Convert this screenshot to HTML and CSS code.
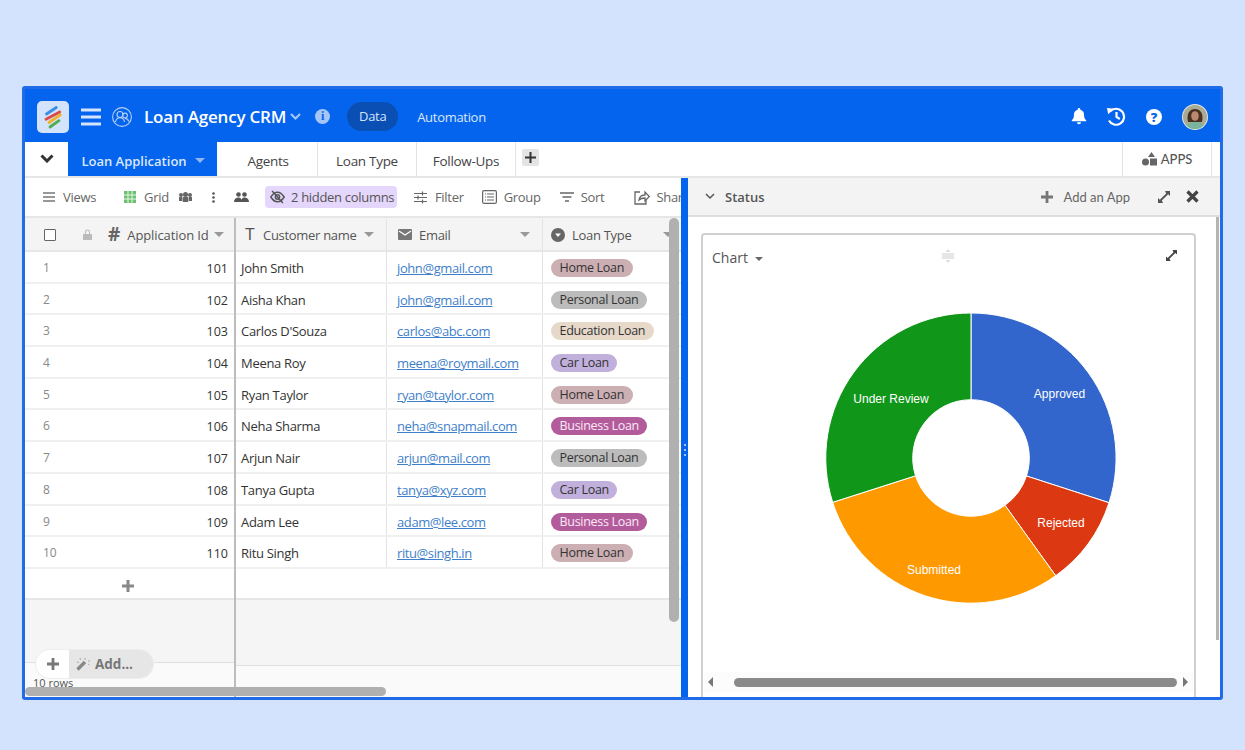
FILE: index.html
```html
<!DOCTYPE html>
<html lang="en">
<head>
<meta charset="utf-8">
<title>Loan Agency CRM</title>
<link rel="stylesheet" href="styles.css">
</head>
<body>
<div class="frame">
  <header class="topbar">
    <div class="logo">
      <svg width="32" height="32" viewBox="0 0 32 32"><g stroke-width="2.800" stroke-linecap="round"><path d="M9.500 13 19.300 6.500" stroke="#3a8ee6"/><path d="M9 18.300 22.700 11" stroke="#dd4a48"/><path d="M12 21.500 23.300 13.800" stroke="#eeb32e"/><path d="M13 26 22 19.700" stroke="#4cae4f"/></g></svg>
    </div>
    <svg class="burger" width="20" height="18" viewBox="0 0 20 18"><path d="M0 2h20M0 9h20M0 16h20" stroke="#d5e4fb" stroke-width="3"/></svg>
    <svg class="people" width="20" height="20" viewBox="0 0 20 20" fill="none" stroke="#b5d0f8" stroke-width="1.100"><circle cx="10" cy="10" r="9.400"/><circle cx="8" cy="7.500" r="3"/><path d="M3.500 15c.5-3 2-4.300 4.500-4.300s4 1.300 4.500 4.300"/><circle cx="13" cy="8.500" r="2.400"/><path d="M13 11.500c2 0 3.300 1 3.800 3"/></svg>
    <span class="title">Loan Agency CRM</span>
    <svg class="title-chev" width="11" height="7" viewBox="0 0 11 7" fill="none"><path d="M1 1l4.500 4.500L10 1" stroke="#a9c8f7" stroke-width="2"/></svg>
    <span class="info">i</span>
    <span class="pill-data">Data</span>
    <span class="auto">Automation</span>
    <div class="top-right">
      <svg width="16" height="17" viewBox="0 0 16 17"><path fill="#fff" d="M8 0a1.300 1.300 0 0 1 1.300 1.300v.4A5 5 0 0 1 13 6.500c0 4 1.500 5 2.200 5.800v1H.8v-1C1.500 11.500 3 10.500 3 6.500a5 5 0 0 1 3.700-4.800v-.4A1.300 1.300 0 0 1 8 0zM6 14.300h4a2 2 0 0 1-4 0z"/></svg>
      <svg class="history" width="20" height="19" viewBox="0 0 20 19" fill="none"><path d="M4.200 4.300A8 8 0 1 1 3 13.500" stroke="#fff" stroke-width="2.200"/><path d="M1 1l7 .8-5.800 5.500z" fill="#fff"/><path d="M10.500 5v5l3.300 2" stroke="#fff" stroke-width="2.200"/></svg>
      <span class="help">?</span>
      <svg class="avatar" width="26" height="26" viewBox="0 0 26 26"><defs><clipPath id="av"><circle cx="13" cy="13" r="12"/></clipPath></defs><circle cx="13" cy="13" r="13" fill="#e2e6dc"/><g clip-path="url(#av)"><rect width="26" height="26" fill="#a9ab94"/><path d="M6 18C4 9 8 5 13 5s9 4 7 13z" fill="#4a3022"/><ellipse cx="13" cy="12" rx="3.800" ry="4.800" fill="#b98a6e"/><path d="M2 27c1-7 6-9 11-9s10 2 11 9z" fill="#79b59c"/></g></svg>
    </div>
  </header>

  <nav class="tabs">
    <span class="tab-toggle"><svg width="14" height="9" viewBox="0 0 14 9" fill="none"><path d="M1.500 1.500 7 7l5.500-5.500" stroke="#333" stroke-width="3"/></svg></span>
    <span class="tab tab-active">Loan Application <i class="caret caret-light"></i></span>
    <span class="tab tab-plain">Agents</span>
    <span class="tab tab-plain">Loan Type</span>
    <span class="tab tab-plain">Follow-Ups</span>
    <span class="tab-add"><svg width="11" height="11" viewBox="0 0 11 11"><path d="M5.500 0v11M0 5.500h11" stroke="#333" stroke-width="2"/></svg></span>
    <span class="apps">
      <svg width="15" height="14" viewBox="0 0 15 14" fill="#666"><path d="M9.500 0l3.500 5H6z"/><circle cx="3.500" cy="10" r="3.500"/><rect x="8" y="6.500" width="7" height="7"/></svg>
      APPS
    </span>
  </nav>

  <main class="workspace">
    <section class="left">
      <div class="toolbar">
        <span class="tool t-views"><svg width="12" height="10" viewBox="0 0 12 10"><path d="M0 1h12M0 5h12M0 9h12" stroke="#777" stroke-width="1.300"/></svg>Views</span>
        <span class="tool t-grid"><svg width="12" height="12" viewBox="0 0 12 12"><rect width="12" height="12" fill="#6cc070"/><path d="M0 4h12M0 8h12M4 0v12M8 0v12" stroke="#e8f6e8" stroke-width="1"/></svg>Grid</span>
        <svg class="t-group" width="13" height="10" viewBox="0 0 13 10" fill="#666"><circle cx="6.500" cy="2.500" r="2.500"/><circle cx="2" cy="3" r="2"/><circle cx="11" cy="3" r="2"/><rect x="3.500" y="5" width="6" height="5" rx="1"/><rect x="0" y="5" width="3" height="4"/><rect x="10" y="5" width="3" height="4"/></svg>
        <svg class="t-dots" width="3" height="11" viewBox="0 0 3 11" fill="#555"><circle cx="1.500" cy="1.500" r="1.300"/><circle cx="1.500" cy="5.500" r="1.300"/><circle cx="1.500" cy="9.500" r="1.300"/></svg>
        <svg class="t-people" width="15" height="10" viewBox="0 0 15 10" fill="#555"><circle cx="4.500" cy="2.500" r="2.300"/><circle cx="10.500" cy="2.500" r="2.300"/><path d="M0 10c0-3 2-4.500 4.500-4.500S7.300 7 7.500 8c.2-1 .5-2.500 3-2.500S15 7 15 10z"/></svg>
        <span class="tool t-hidden"><svg width="15" height="14" viewBox="0 0 14 13" fill="none" stroke="#555" stroke-width="1.400"><path d="M.8 6.500C3 3 5 2 7 2s4 1 6.200 4.500C11 10 9 11 7 11S3 10 .8 6.500z"/><circle cx="7" cy="6.500" r="2"/><path d="M2 1l10 11"/></svg>2 hidden columns</span>
        <span class="tool t-filter"><svg width="13" height="13" viewBox="0 0 13 13" stroke="#666" stroke-width="1.200" fill="none"><path d="M0 2.500h13M0 6.500h13M0 10.500h13M8.500 .5v4M4 4.500v4M8.500 8.500v4"/></svg>Filter</span>
        <span class="tool t-grp"><svg width="15" height="14" viewBox="0 0 15 14" fill="none" stroke="#666" stroke-width="1.200"><rect x=".6" y=".6" width="13.800" height="12.800" rx="1.500"/><path d="M5 4h7M5 7h7M5 10h7M3 4h1M3 7h1M3 10h1"/></svg>Group</span>
        <span class="tool t-sort"><svg width="14" height="10" viewBox="0 0 14 10" stroke="#666" stroke-width="1.400"><path d="M0 1h14M2.500 5h9M5 9h4"/></svg>Sort</span>
        <span class="tool t-share"><svg width="16" height="15" viewBox="0 0 16 15" fill="none" stroke="#666" stroke-width="1.300"><path d="M6 2H1v12h11V10"/><path d="M5 10c.5-3.500 3-5 6-5V2l4.300 4.500L11 11V8c-2.500 0-4.500.5-6 2z"/></svg>Share</span>
      </div>

      <div class="grid">
        <div class="pane pane-frozen">
          <div class="head head-frozen">
            <span class="checkbox"></span>
            <svg class="lock" width="9" height="11" viewBox="0 0 9 11" fill="#bbb"><path d="M2 5V3a2.500 2.500 0 0 1 5 0v2h2v6H0V5zm1 0h3V3a1.500 1.500 0 0 0-3 0z"/></svg>
            <span class="hash">#</span>
            <span class="head-label head-app">Application Id</span>
            <i class="caret"></i>
          </div>
          <div class="row frow"><span class="idx">1</span><span class="num">101</span></div>
          <div class="row frow"><span class="idx">2</span><span class="num">102</span></div>
          <div class="row frow"><span class="idx">3</span><span class="num">103</span></div>
          <div class="row frow"><span class="idx">4</span><span class="num">104</span></div>
          <div class="row frow"><span class="idx">5</span><span class="num">105</span></div>
          <div class="row frow"><span class="idx">6</span><span class="num">106</span></div>
          <div class="row frow"><span class="idx">7</span><span class="num">107</span></div>
          <div class="row frow"><span class="idx">8</span><span class="num">108</span></div>
          <div class="row frow"><span class="idx">9</span><span class="num">109</span></div>
          <div class="row frow"><span class="idx">10</span><span class="num">110</span></div>
          <div class="add-row"><svg width="12" height="12" viewBox="0 0 12 12"><path d="M6 0v12M0 6h12" stroke="#888" stroke-width="3"/></svg></div>
          <div class="spacer"></div>
          <div class="foot foot-frozen"><span class="row-count">10 rows</span></div>
        </div>
        <div class="pane pane-rest">
          <div class="head head-rest">
            <div class="hc c-name"><span class="ty-t">T</span><span class="head-label">Customer name</span><i class="caret"></i></div>
            <div class="hc c-mail"><svg width="14" height="11" viewBox="0 0 14 11"><rect width="14" height="11" rx="1" fill="#777"/><path d="M1 2l6 4 6-4" stroke="#fff" fill="none" stroke-width="1.200"/></svg><span class="head-label">Email</span><i class="caret"></i></div>
            <div class="hc c-type"><svg width="14" height="14" viewBox="0 0 14 14"><circle cx="7" cy="7" r="7" fill="#666"/><path d="M4 5.500h6L7 9z" fill="#fff"/></svg><span class="head-label">Loan Type</span><i class="caret"></i></div>
          </div>
          <div class="row"><div class="c-name">John Smith</div><div class="c-mail"><a>john@gmail.com</a></div><div class="c-type"><span class="chip home">Home Loan</span></div></div>
          <div class="row"><div class="c-name">Aisha Khan</div><div class="c-mail"><a>john@gmail.com</a></div><div class="c-type"><span class="chip personal">Personal Loan</span></div></div>
          <div class="row"><div class="c-name">Carlos D'Souza</div><div class="c-mail"><a>carlos@abc.com</a></div><div class="c-type"><span class="chip edu">Education Loan</span></div></div>
          <div class="row"><div class="c-name">Meena Roy</div><div class="c-mail"><a>meena@roymail.com</a></div><div class="c-type"><span class="chip car">Car Loan</span></div></div>
          <div class="row"><div class="c-name">Ryan Taylor</div><div class="c-mail"><a>ryan@taylor.com</a></div><div class="c-type"><span class="chip home">Home Loan</span></div></div>
          <div class="row"><div class="c-name">Neha Sharma</div><div class="c-mail"><a>neha@snapmail.com</a></div><div class="c-type"><span class="chip biz">Business Loan</span></div></div>
          <div class="row"><div class="c-name">Arjun Nair</div><div class="c-mail"><a>arjun@mail.com</a></div><div class="c-type"><span class="chip personal">Personal Loan</span></div></div>
          <div class="row"><div class="c-name">Tanya Gupta</div><div class="c-mail"><a>tanya@xyz.com</a></div><div class="c-type"><span class="chip car">Car Loan</span></div></div>
          <div class="row"><div class="c-name">Adam Lee</div><div class="c-mail"><a>adam@lee.com</a></div><div class="c-type"><span class="chip biz">Business Loan</span></div></div>
          <div class="row"><div class="c-name">Ritu Singh</div><div class="c-mail"><a>ritu@singh.in</a></div><div class="c-type"><span class="chip home">Home Loan</span></div></div>
          <div class="add-row"></div>
          <div class="spacer"></div>
          <div class="foot"></div>
        </div>
      </div>

      <div class="add-pill">
        <span class="add-plus"><svg width="12" height="12" viewBox="0 0 12 12"><path d="M6 0v12M0 6h12" stroke="#777" stroke-width="2.800"/></svg></span>
        <span class="add-more"><svg width="14" height="14" viewBox="0 0 14 14"><path d="M1.500 12.500 9 5" stroke="#888" stroke-width="3.400"/><path d="M4 1l.5 2M9 1v2M1 5l2 .5M12 4h2M12 7l1.500 1" stroke="#aaa" stroke-width="1"/></svg>Add...</span>
      </div>
      <div class="vscroll"></div>
      <div class="hscroll"></div>
    </section>

    <div class="divider"><span class="grip"></span><span class="grip"></span><span class="grip"></span></div>

    <section class="right">
      <div class="status">
        <svg width="10" height="7" viewBox="0 0 10 7" fill="none"><path d="M1 1l4 4 4-4" stroke="#555" stroke-width="1.500"/></svg>
        <span class="status-title">Status</span>
        <span class="add-app"><svg width="12" height="12" viewBox="0 0 12 12"><path d="M6 0v12M0 6h12" stroke="#777" stroke-width="2.800"/></svg>Add an App</span>
        <svg class="st-expand" width="12" height="12" viewBox="0 0 12 12"><path d="M7 0h5v5l-1.800-1.800-6.400 6.400L5 12H0V7l1.800 1.800 6.400-6.400z" fill="#555"/></svg>
        <svg class="st-close" width="13" height="13" viewBox="0 0 13 13"><path d="M1.500 1.500l10 10M11.500 1.500l-10 10" stroke="#444" stroke-width="3.200"/></svg>
      </div>
      <div class="panel">
        <div class="card">
          <div class="card-head">
            <span class="chart-menu">Chart <i class="caret caret-small"></i></span>
            <svg class="drag" width="12" height="14" viewBox="0 0 12 14"><path d="M0 5h12M0 7h12M0 9h12" stroke="#ccc" stroke-width="1"/><path d="M6 0l2.500 3h-5zM6 14l2.500-3h-5z" fill="#ddd"/></svg>
            <svg class="card-expand" width="11" height="11" viewBox="0 0 12 12"><path d="M7 0h5v5l-1.800-1.800-6.400 6.400L5 12H0V7l1.800 1.800 6.400-6.400z" fill="#444"/></svg>
          </div>
          <svg class="donut" width="300" height="300" viewBox="0 0 300 300">
            <g stroke="#fff" stroke-width="1">
              <path fill="#3366cc" d="M150 5A145 145 0 0 1 288 194.700L205.500 168A58.300 58.300 0 0 0 150 91.700Z"/>
              <path fill="#dc3912" d="M288 194.700A145 145 0 0 1 234.700 267.700L184 197.300A58.300 58.300 0 0 0 205.500 168Z"/>
              <path fill="#ff9900" d="M234.700 267.700A145 145 0 0 1 11.700 194.300L94.500 167.800A58.300 58.300 0 0 0 184 197.300Z"/>
              <path fill="#109618" d="M11.700 194.300A145 145 0 0 1 150 5L150 91.700A58.300 58.300 0 0 0 94.500 167.800Z"/>
            </g>
            <g class="donut-labels">
              <text x="238.500" y="89.500">Approved</text>
              <text x="240" y="219">Rejected</text>
              <text x="113" y="266">Submitted</text>
              <text x="70" y="95">Under Review</text>
            </g>
          </svg>
          <div class="card-scroll">
            <i class="arrow-l"></i>
            <span class="card-thumb"></span>
            <i class="arrow-r"></i>
          </div>
        </div>
        <div class="panel-scroll"></div>
      </div>
    </section>
  </main>
</div>
</body>
</html>
```
FILE: styles.css
```css
* { box-sizing: border-box; }
html, body { margin: 0; height: 100%; }
body {
  background: #d3e3fd;
  padding: 86px 0 0 22px;
  font-family: "Open Sans", "Noto Sans", sans-serif;
  font-size: 13px;
  letter-spacing: -.3px;
  color: #333;
  overflow: hidden;
}
.frame {
  width: 1201px;
  height: 614px;
  border: 3px solid #1f6be8;
  border-radius: 3px;
  background: #fff;
  display: flex;
  flex-direction: column;
  overflow: hidden;
}

/* top bar */
.topbar {
  height: 53px;
  flex: none;
  background: #0564ee;
  display: flex;
  align-items: center;
  color: #fff;
  margin: 0 -3px;
  padding-left: 15px;
  padding-top: 2px;
}
.logo {
  width: 32px; height: 32px;
  background: #d3e3fb;
  border-radius: 5px;
  display: flex;
}
.burger { margin-left: 12px; }
.people { margin-left: 11px; }
.title { margin-left: 12px; font-size: 17px; font-weight: 600; letter-spacing: -.2px; }
.title-chev { margin-left: 4px; }
.info {
  margin-left: 14px;
  width: 15px; height: 15px;
  border-radius: 50%;
  background: #a5c5f7;
  color: #0564ee;
  font: bold 12px/15px "Liberation Serif", serif;
  letter-spacing: 0;
  text-align: center;
}
.pill-data {
  margin-left: 17px;
  width: 51px; height: 29px;
  border-radius: 15px;
  background: #0a4fb4;
  color: #d5e4fb;
  line-height: 29px;
  text-align: center;
}
.auto { margin-left: 19px; color: #dbe8fc; }
.top-right {
  margin-left: auto;
  margin-right: 15px;
  display: flex;
  align-items: center;
}
.history { margin-left: 19px; }
.help {
  margin-left: 20px;
  width: 16px; height: 16px;
  border-radius: 50%;
  background: #fff;
  color: #0564ee;
  font-size: 13px;
  font-weight: 800;
  line-height: 16px;
  letter-spacing: 0;
  text-align: center;
}
.avatar { margin-left: 20px; }

/* tabs */
.tabs {
  height: 36px;
  flex: none;
  display: flex;
  align-items: stretch;
  border-bottom: 2px solid #e6e6e6;
}
.tab-toggle { width: 43px; display: flex; justify-content: center; padding-top: 12px; }
.tab {
  display: flex; align-items: center; justify-content: center;
  font-size: 13.500px;
  padding-top: 3px;
}
.tab-active {
  width: 149px;
  background: #0564ee;
  color: #dbe8fc;
  font-weight: 600;
  font-size: 13px;
  letter-spacing: 0;
  gap: 8px;
  padding-left: 1px;
  margin-right: 2px;
}
.tab-plain { width: 99px; border-right: 1px solid #e3e3e3; color: #444; }
.tab-add {
  width: 17px; height: 17px;
  background: #e4e4e4;
  border-radius: 2px;
  margin: 7px 0 0 6px;
  display: flex; align-items: center; justify-content: center;
}
.apps {
  margin-left: auto;
  margin-right: 8px;
  width: 90px;
  border-left: 1px solid #e3e3e3;
  border-right: 1px solid #e3e3e3;
  display: flex; align-items: center; justify-content: center;
  gap: 4px;
  font-family: Lato, sans-serif;
  font-size: 13px;
  font-weight: 500;
  letter-spacing: 0;
  color: #555;
}
.caret {
  display: inline-block;
  width: 0; height: 0;
  border-left: 5px solid transparent;
  border-right: 5px solid transparent;
  border-top: 5.500px solid #999;
}
.caret-light { border-top-color: #8fb6f3; }
.caret-small { border-left-width: 4px; border-right-width: 4px; border-top: 4.500px solid #666; vertical-align: 2px; margin-left: 3px; }

/* workspace */
.workspace { flex: 1; min-height: 0; display: flex; }
.left {
  width: 656px;
  flex: none;
  position: relative;
  overflow: hidden;
  display: flex;
  flex-direction: column;
}
.toolbar {
  height: 40px;
  flex: none;
  display: flex;
  align-items: center;
  border-bottom: 2px solid #e6e6e6;
  color: #666;
  white-space: nowrap;
  padding-left: 18px;
}
.tool { display: inline-flex; align-items: center; gap: 8px; }
.t-grid { margin-left: 28px; }
.t-group { margin-left: 10px; flex: none; }
.t-dots { margin-left: 20px; flex: none; }
.t-people { margin-left: 19px; flex: none; }
.t-hidden {
  margin-left: 16px;
  width: 132px; height: 22px;
  background: #e5d6fc;
  border-radius: 4px;
  padding-left: 5px;
  gap: 6px;
  color: #555;
  flex: none;
}
.t-filter { margin-left: 17px; }
.t-grp { margin-left: 18px; gap: 7px; }
.t-sort { margin-left: 19px; gap: 7px; }
.t-share { margin-left: 30px; gap: 6px; }

.grid { flex: 1; min-height: 0; display: flex; background: #f5f5f5; }
.pane { display: flex; flex-direction: column; }
.pane-frozen { width: 211px; flex: none; border-right: 2px solid #bdbdbd; }
.pane-rest { flex: 1; min-width: 0; }
.head {
  height: 34px;
  flex: none;
  background: #f4f4f4;
  border-bottom: 2px solid #e6e6e6;
  display: flex;
  align-items: center;
  color: #555;
  padding-top: 1px;
}
.head-frozen { padding-left: 19px; }
.checkbox { width: 12px; height: 12px; border: 1.500px solid #666; background: #fff; flex: none; border-radius: 1px; }
.lock { margin-left: 27px; flex: none; }
.hash { margin-left: 16px; font-size: 19px; font-weight: 700; color: #666; line-height: 1; letter-spacing: 0; }
.head-label { margin-left: 7px; white-space: nowrap; }
.head-app { letter-spacing: -.1px; }
.head .caret { margin-left: auto; flex: none; }
.head-frozen .caret { margin-right: 10px; }
.hc { display: flex; align-items: center; height: 100%; }
.hc.c-name { padding-left: 8px; padding-right: 12px; }
.hc.c-mail { padding-left: 11px; padding-right: 12px; }
.hc.c-type { padding-left: 8px; padding-right: 0; }
.hc.c-type .caret { margin-left: 32px; }
.ty-t { font: 400 16px "Liberation Sans", sans-serif; color: #555; width: 12px; text-align: center; letter-spacing: 0; }
.c-name { width: 151px; flex: none; border-right: 1px solid #e3e3e3; }
.c-mail { width: 156px; flex: none; border-right: 1px solid #e3e3e3; }
.c-type { flex: 1; min-width: 0; white-space: nowrap; }
.row {
  height: 31.700px;
  flex: none;
  background: #fff;
  border-bottom: 2px solid #f0f0f0;
  display: flex;
  align-items: stretch;
  color: #333;
  line-height: 33px;
}
.row .c-name { padding-left: 5px; }
.row .c-mail { padding-left: 10px; }
.row .c-type { padding-left: 8px; }
.row a { color: #3f7fca; text-decoration: underline; letter-spacing: -.4px; }
.frow { justify-content: space-between; padding: 0 6px 0 18px; }
.idx { color: #888; font-size: 12px; line-height: 31px; letter-spacing: 0; }
.num { font-size: 12.500px; letter-spacing: 0; }
.chip {
  display: inline-block;
  height: 18px;
  line-height: 18px;
  border-radius: 9px;
  padding: 0 8.500px;
  font-size: 12.500px;
  vertical-align: 1px;
  color: #333;
}
.home { background: #ccafb3; }
.personal { background: #bcbcbc; }
.edu { background: #e6d9ca; }
.car { background: #c2b0dc; }
.biz { background: #b25c9c; color: #fbe9f6; }
.add-row {
  height: 31px;
  flex: none;
  background: #fff;
  border-bottom: 2px solid #e6e6e6;
  display: flex;
  align-items: center;
  justify-content: center;
  padding: 6px 4px 0 0;
}
.spacer { flex: 1; }
.foot { height: 32px; flex: none; background: #fafafa; border-top: 1px solid #e0e0e0; }
.foot-frozen { height: 35px; position: relative; }
.row-count { position: absolute; left: 8px; top: 12px; font-size: 11px; letter-spacing: 0; color: #555; }
.add-pill {
  position: absolute;
  left: 11px;
  top: 472px;
  width: 117px; height: 28px;
  border-radius: 14px;
  background: #e6e6e6;
  display: flex;
  overflow: hidden;
  box-shadow: 0 0 0 1px #eee;
}
.add-plus { width: 33px; background: #fff; display: flex; align-items: center; justify-content: center; }
.add-more { display: flex; align-items: center; gap: 5px; padding-left: 7px; font-size: 13.500px; font-weight: 700; letter-spacing: 0; color: #777; }
.vscroll {
  position: absolute;
  right: 2px; top: 40px;
  width: 10px; height: 404px;
  background: #b0b0b0;
  border-radius: 5px;
}
.hscroll {
  position: absolute;
  left: 0; bottom: 1px;
  width: 361px; height: 9px;
  background: #b0b0b0;
  border-radius: 5px;
}

/* divider */
.divider {
  width: 7px;
  flex: none;
  background: #0564ee;
  display: flex;
  flex-direction: column;
  align-items: center;
  justify-content: center;
  gap: 3px;
  padding-top: 25px;
}
.grip { width: 2px; height: 2px; background: #d6e5fc; border-radius: 50%; }

/* right */
.right { flex: 1; min-width: 0; display: flex; flex-direction: column; }
.status {
  height: 39px;
  flex: none;
  background: #f3f3f3;
  border-bottom: 2px solid #dedede;
  display: flex;
  align-items: center;
  padding-left: 17px;
}
.status-title { margin-left: 10px; font-size: 13px; font-weight: 600; letter-spacing: 0; color: #555; }
.add-app {
  margin-left: auto;
  display: flex; align-items: center; gap: 10px;
  font-family: Lato, sans-serif;
  font-size: 13px;
  letter-spacing: 0;
  color: #666;
}
.st-expand { margin-left: 28px; }
.st-close { margin-left: 16px; margin-right: 21px; }
.panel { flex: 1; min-height: 0; position: relative; padding: 16px 0 0 13px; }
.card {
  width: 495px;
  height: 100%;
  border: 2px solid #d0d0d0;
  border-bottom: 0;
  border-radius: 4px 4px 0 0;
  position: relative;
}
.card-head { height: 73px; position: relative; }
.chart-menu { position: absolute; left: 9px; top: 13px; font-size: 14px; letter-spacing: 0; color: #555; }
.drag { position: absolute; left: 239px; top: 14px; }
.card-expand { position: absolute; left: 463px; top: 15px; }
.donut { display: block; margin-left: 118px; }
.donut-labels { font: 12px "Liberation Sans", sans-serif; letter-spacing: 0; fill: #fff; text-anchor: middle; }
.card-scroll {
  position: absolute;
  left: 1px; right: 0; bottom: 5px;
  height: 20px;
  background: #fcfcfc;
  display: flex;
  align-items: center;
  padding-left: 4px;
}
.card-thumb { width: 443px; height: 9px; background: #8a8a8a; border-radius: 5px; margin: 0 6px 0 21px; }
.arrow-l, .arrow-r { width: 0; height: 0; border-top: 5px solid transparent; border-bottom: 5px solid transparent; }
.arrow-l { border-right: 5px solid #777; }
.arrow-r { border-left: 5px solid #777; }
.panel-scroll {
  position: absolute;
  right: 1px; top: 0;
  width: 3px; height: 423px;
  background: #b4b4b4;
}
```
